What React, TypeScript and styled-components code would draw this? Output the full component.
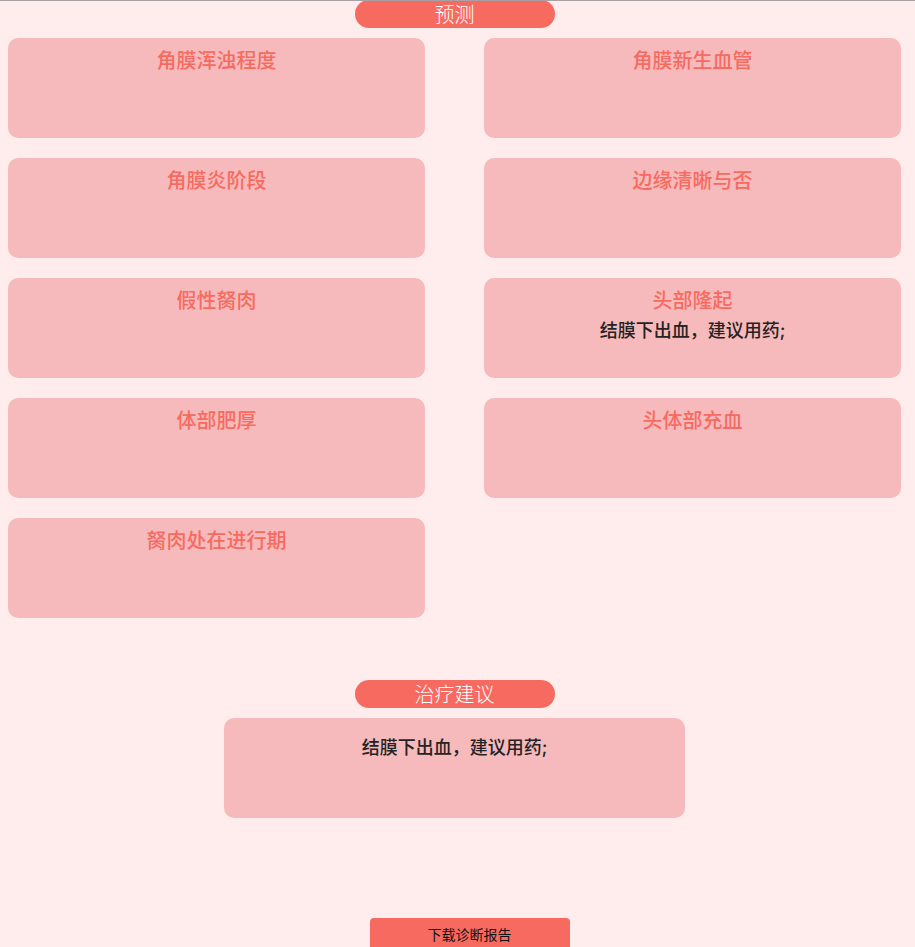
import React from "react";
import styled, { createGlobalStyle } from "styled-components";

const GlobalStyle = createGlobalStyle`
  *, *::before, *::after { box-sizing: border-box; }
  html { background: #ffecec; }
  body {
    margin: 0;
    color: #262224;
    font-family: Inter, "Noto Sans CJK SC", sans-serif;
  }
`;

const Page = styled.main`
  position: relative;
  display: flex;
  flex-direction: column;
  align-items: center;
  height: 100vh;
  overflow: hidden;
  padding: 0 14px 0 8px;

  &::before {
    content: "";
    position: absolute;
    inset: 0 0 auto;
    height: 1px;
    background: #aaa0a4;
  }
`;

const SectionTitle = styled.h2`
  flex: none;
  width: 200px;
  margin: 0;
  padding-top: 2px;
  border-radius: 14px;
  background: #f76a60;
  color: #ffffff;
  font-family: "Liberation Serif", "Noto Sans CJK SC", serif;
  font-size: 20px;
  font-weight: 300;
  line-height: 26px;
  text-align: center;
`;

const CardGrid = styled.section`
  display: grid;
  grid-template-columns: 1fr 1fr;
  column-gap: 59px;
  row-gap: 20px;
  width: 100%;
  margin: 10px 0 62px;
`;

const Card = styled.article`
  height: 100px;
  padding-top: 8px;
  border-radius: 10px;
  background: #f6babc;
  text-align: center;
`;

const CardTitle = styled.h3`
  margin: 0;
  color: #f76a60;
  font-size: 20px;
  font-weight: 500;
  line-height: 30px;
`;

const Advice = styled.p`
  margin: 0;
  font-size: 18px;
  font-weight: 500;
  line-height: 30px;
`;

const AdviceCard = styled(Card)`
  flex: none;
  width: 51.6%;
  margin: 10px 0 100px;
  padding-top: 15px;
`;

const DownloadButton = styled.button`
  flex: none;
  width: 200px;
  height: 34px;
  margin-left: 30px;
  border: 0;
  border-radius: 4px;
  background: #f76a60;
  color: #111111;
  font: 400 14px/20px "Liberation Sans", "Noto Sans CJK SC", sans-serif;
  cursor: pointer;
`;

const advice = "结膜下出血，建议用药;";

const predictions: { title: string; result?: string }[] = [
  { title: "角膜浑浊程度" },
  { title: "角膜新生血管" },
  { title: "角膜炎阶段" },
  { title: "边缘清晰与否" },
  { title: "假性胬肉" },
  { title: "头部隆起", result: advice },
  { title: "体部肥厚" },
  { title: "头体部充血" },
  { title: "胬肉处在进行期" },
];

export default function App() {
  return (
    <>
      <GlobalStyle />
      <Page lang="zh-CN">
        <SectionTitle>预测</SectionTitle>
        <CardGrid>
          {predictions.map(({ title, result }) => (
            <Card key={title}>
              <CardTitle>{title}</CardTitle>
              {result && <Advice>{result}</Advice>}
            </Card>
          ))}
        </CardGrid>
        <SectionTitle>治疗建议</SectionTitle>
        <AdviceCard>
          <Advice>{advice}</Advice>
        </AdviceCard>
        <DownloadButton type="button">下载诊断报告</DownloadButton>
      </Page>
    </>
  );
}
